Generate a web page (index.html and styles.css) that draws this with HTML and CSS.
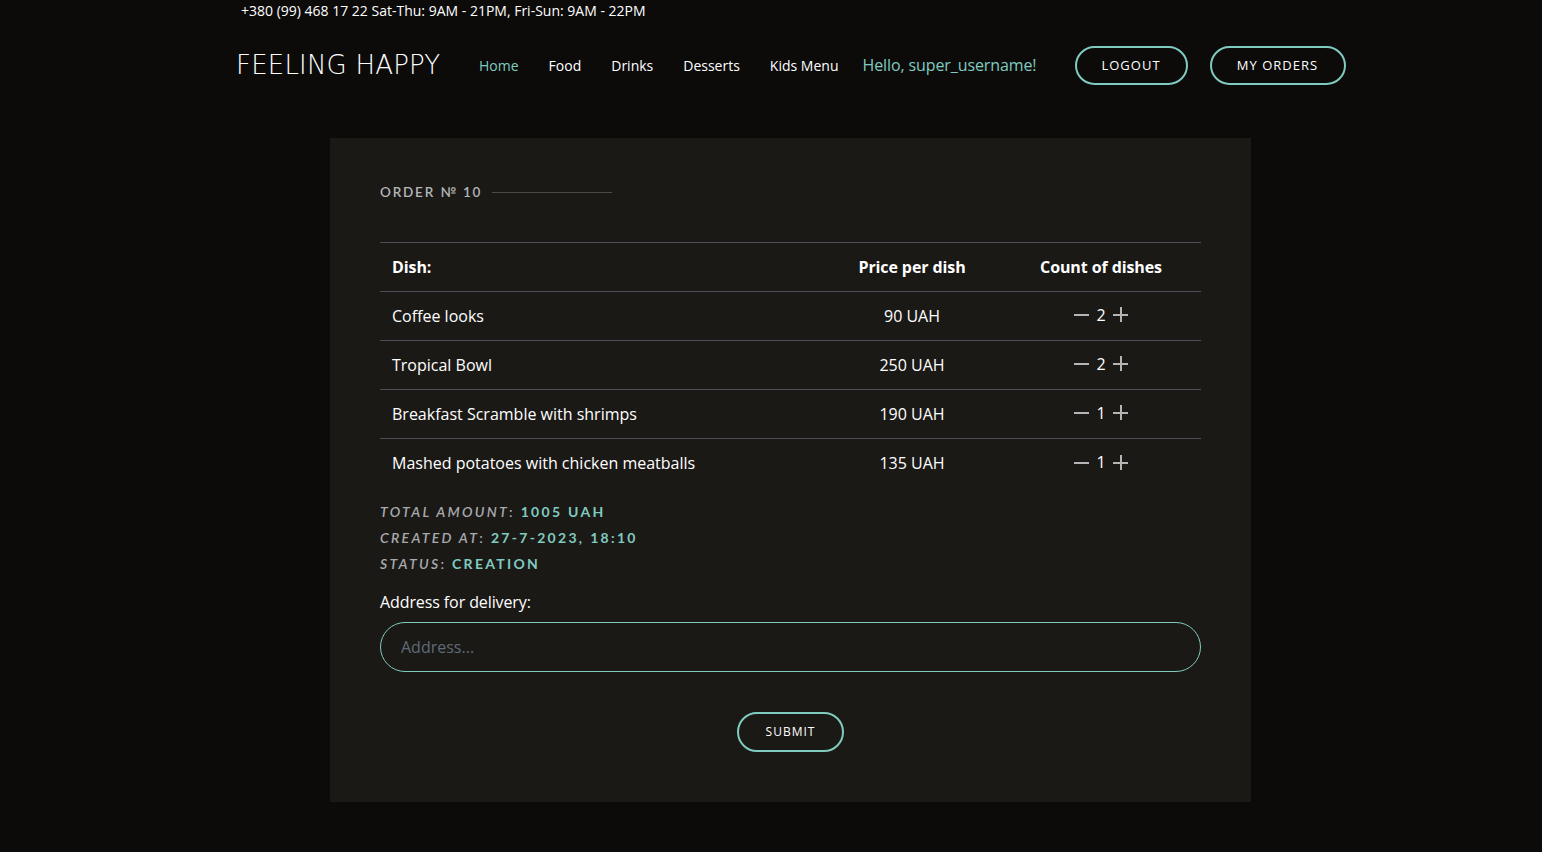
FILE: index.html
```html
<!DOCTYPE html>
<html lang="en">
<head>
<meta charset="utf-8">
<title>Feeling Happy - Order</title>
<link rel="stylesheet" href="styles.css">
</head>
<body>
<div class="topbar">
  <div class="container"><span>+380 (99) 468 17 22</span> <span>Sat-Thu: 9AM - 21PM, Fri-Sun: 9AM - 22PM</span></div>
</div>
<header class="header">
  <div class="container header-inner">
    <a class="logo" href="#">FEELING HAPPY</a>
    <nav class="nav">
      <a class="nav-link active" href="#">Home</a>
      <a class="nav-link" href="#">Food</a>
      <a class="nav-link" href="#">Drinks</a>
      <a class="nav-link" href="#">Desserts</a>
      <a class="nav-link" href="#">Kids Menu</a>
    </nav>
    <span class="hello">Hello, super_username!</span>
    <a class="btn btn-nav" href="#">LOGOUT</a>
    <a class="btn btn-nav btn-orders" href="#">MY ORDERS</a>
  </div>
</header>
<main class="main">
  <section class="card">
    <h2 class="section-title">ORDER № 10</h2>
    <table class="order-table">
      <thead>
        <tr><th class="col-dish">Dish:</th><th class="col-price">Price per dish</th><th class="col-count">Count of dishes</th></tr>
      </thead>
      <tbody>
        <tr><td>Coffee looks</td><td class="center">90 UAH</td><td class="center"><span class="counter"><span class="minus"></span>2<span class="plus"></span></span></td></tr>
        <tr><td>Tropical Bowl</td><td class="center">250 UAH</td><td class="center"><span class="counter"><span class="minus"></span>2<span class="plus"></span></span></td></tr>
        <tr><td>Breakfast Scramble with shrimps</td><td class="center">190 UAH</td><td class="center"><span class="counter"><span class="minus"></span>1<span class="plus"></span></span></td></tr>
        <tr><td>Mashed potatoes with chicken meatballs</td><td class="center">135 UAH</td><td class="center"><span class="counter"><span class="minus"></span>1<span class="plus"></span></span></td></tr>
      </tbody>
    </table>
    <div class="info">
      <p><em>TOTAL AMOUNT</em>: <span class="val">1005 UAH</span></p>
      <p><em>CREATED AT</em>: <span class="val">27-7-2023, 18:10</span></p>
      <p><em>STATUS</em>: <span class="val">CREATION</span></p>
    </div>
    <label class="addr-label" for="addr">Address for delivery:</label>
    <input id="addr" class="addr-input" type="text" placeholder="Address...">
    <div class="submit-row"><button class="btn btn-submit" type="button">SUBMIT</button></div>
  </section>
</main>
</body>
</html>
```
FILE: styles.css
```css
* { box-sizing: border-box; }
html, body { margin: 0; padding: 0; }
body {
  background: #0c0b0a;
  color: #fff;
  font-family: "Open Sans", "Liberation Sans", sans-serif;
  min-height: 852px;
}
a { text-decoration: none; color: inherit; }
.container { width: 1150px; margin: 0 auto; padding-left: 40px; }

.topbar { height: 22px; font-size: 14px; line-height: 22px; color: #fff; letter-spacing: 0; }
.topbar .container { padding-left: 45px; }

.header { height: 86px; }
.header-inner { display: flex; align-items: center; height: 86px; white-space: nowrap; }
.logo {
  flex: none;
  width: 228px;
  font-family: "DejaVu Sans", "Lato", sans-serif;
  font-weight: 200;
  font-size: 26px;
  letter-spacing: 0.2px;
  color: #fff;
  margin-top: 0;
}
.nav { display: flex; flex: none; }
.nav-link { font-size: 14px; padding: 0 15px; color: #fff; }
.nav-link.active { color: #80cbc0; }
.hello { flex: none; color: #80cbc0; font-size: 16px; margin-left: 9px; letter-spacing: -0.1px; }
.btn {
  display: inline-flex; align-items: center; justify-content: center; flex: none;
  border: 2px solid #80cbc0; border-radius: 22px; background: transparent;
  color: #fff; font-family: "Open Sans", sans-serif; font-size: 13px; letter-spacing: 1px;
  font-weight: 500;
}
.btn-nav { height: 39px; width: 113px; margin-left: 38px; }
.btn-orders { width: 136px; margin-left: 22px; }

.main { display: flex; justify-content: center; padding-top: 30px; padding-left: 39px; }
.card { width: 921px; background: #1b1916; padding: 40px 50px 50px; }
.section-title {
  display: flex; align-items: center; margin: 0 0 36px;
  font-family: "Lato", sans-serif; font-weight: 600; font-size: 13.5px; letter-spacing: 1.8px;
  color: #b3b6b9; height: 28px;
}
.section-title::after { content: ""; display: block; width: 120px; height: 1px; background: #4a4a48; margin-left: 10px; }

.order-table { width: 100%; border-collapse: collapse; font-size: 16px; }
.order-table th, .order-table td { height: 49px; padding: 0 12px; border-top: 1px solid #4b4f55; text-align: left; vertical-align: middle; }
.order-table th { font-weight: 700; letter-spacing: -0.1px; }
.order-table td { letter-spacing: 0; }
.order-table th.col-price, .order-table th.col-count { text-align: center; }
.col-price { width: 178px; }
.col-count { width: 200px; }
.order-table td.center { text-align: center; }
.counter { display: inline-flex; align-items: center; gap: 6px; }
.minus, .plus { position: relative; display: inline-block; width: 17px; height: 17px; }
.minus::before, .plus::before { content: ""; position: absolute; left: 1px; right: 1px; top: 8px; height: 2px; background: #b5b5b5; }
.plus::after { content: ""; position: absolute; top: 1px; bottom: 1px; left: 8px; width: 2px; background: #b5b5b5; }

.info { margin-top: 11px; }
.info p { margin: 0; font-family: "Lato", sans-serif; font-size: 14px; line-height: 26px; letter-spacing: 2.3px; color: #a7aaad; font-weight: 600; }
.info em { font-style: italic; }
.info .val { color: #80cbc0; font-weight: 700; }

.addr-label { display: block; font-size: 16px; margin-top: 13px; letter-spacing: -0.1px; line-height: 24px; }
.addr-input {
  display: block; width: 100%; height: 50px; margin-top: 8px;
  background: transparent; border: 1px solid #80cbc0; border-radius: 25px;
  padding: 0 20px; font-family: "Open Sans", sans-serif; font-size: 16px; color: #fff; outline: none;
}
.addr-input::placeholder { color: #5f6b78; }
.submit-row { display: flex; justify-content: center; margin-top: 40px; }
.btn-submit { width: 107px; height: 40px; font-size: 12px; }
```
